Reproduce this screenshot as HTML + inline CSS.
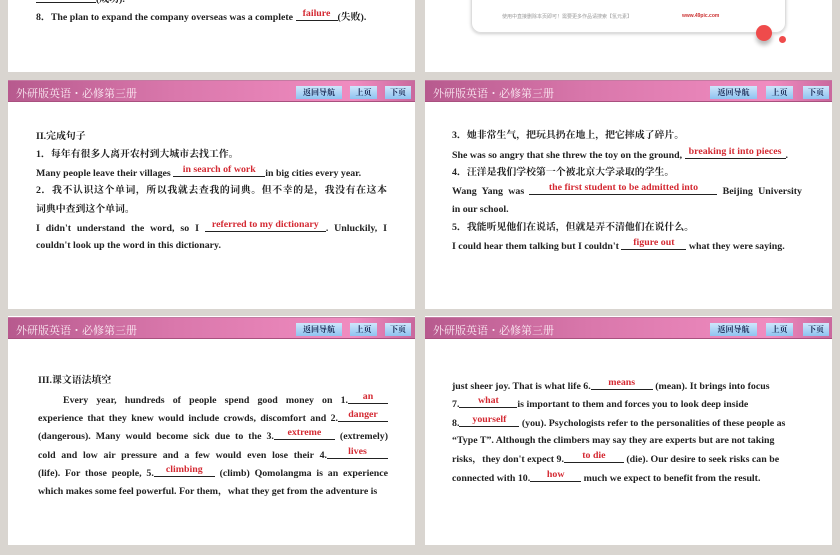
<!DOCTYPE html>
<html><head><meta charset="utf-8"><style>
*{margin:0;padding:0;box-sizing:border-box}
body{width:840px;height:555px;background:#d9d5d0;position:relative;overflow:hidden;font-family:"Liberation Serif","Noto Serif CJK SC",serif;font-weight:bold;font-size:9.9px;color:#222}
.p{position:absolute;background:#fff}
.h{position:absolute;height:22px;background:linear-gradient(90deg,#b75a8e 0%,#d977ab 40%,#f08cc0 85%,#c9689d 100%);border-top:1px solid #c47aa2;border-bottom:1px solid #a9507f}
.h .t{position:absolute;left:8px;top:4px;color:#fbe9f3;font-size:11px;font-weight:normal;font-family:"Noto Serif CJK SC",serif}
.btn{position:absolute;top:5px;height:13px;background:linear-gradient(#cfe6fb,#8fc3f0);color:#1a2a55;font-size:8px;text-align:center;line-height:13px;font-family:"Noto Serif CJK SC",serif}
.l{position:absolute;white-space:nowrap;line-height:12px}
.j{text-align:justify;text-align-last:justify;white-space:normal}
.b{display:inline-block;border-bottom:1px solid #222;position:relative;height:10px;vertical-align:-1px}
.b i{position:absolute;left:-10px;right:-10px;top:-3px;text-align:center;text-align-last:center;color:#d42a33;font-style:normal;white-space:nowrap}
</style></head><body>
<div class="p" style="left:8px;top:0;width:407px;height:72px"></div>
<div class="p" style="left:425px;top:0;width:407px;height:72px"></div>
<div style="position:absolute;left:471px;top:-10px;width:315px;height:43px;border:1px solid #ddd;border-radius:0 0 10px 10px;box-shadow:0 1px 3px #ccc"></div>
<div style="position:absolute;left:502px;top:13px;font-size:5px;color:#999;font-weight:normal;font-family:'Noto Sans CJK SC',sans-serif">使用中直接删除本页即可！需要更多作品请搜索【氢元素】</div>
<div style="position:absolute;left:682px;top:13px;font-size:5px;color:#c33;font-family:'Liberation Sans',sans-serif">www.49pic.com</div>
<div style="position:absolute;left:756px;top:25px;width:16px;height:16px;border-radius:50%;background:#ef4b4b;box-shadow:0 4px 4px #bbb"></div>
<div style="position:absolute;left:779px;top:36px;width:7px;height:7px;border-radius:50%;background:#ef4b4b"></div>
<div class="l" style="left:36px;top:-7px"><span class="b" style="width:60px"></span>(成功).</div>
<div class="l" style="left:36px;top:11px">8．The plan to expand the company overseas was a complete <span class="b" style="width:42px"><i>failure</i></span>(失败).</div>

<div class="p" style="left:8px;top:80px;width:407px;height:229px"></div>
<div class="p" style="left:425px;top:80px;width:407px;height:229px"></div>
<div class="p" style="left:8px;top:316px;width:407px;height:229px"></div>
<div class="p" style="left:425px;top:316px;width:407px;height:229px"></div>

<div class="h" style="left:8px;top:80px;width:407px"><span class="t">外研版英语・必修第三册</span><span class="btn" style="left:288px;width:46px">返回导航</span><span class="btn" style="left:342px;width:27px">上页</span><span class="btn" style="left:377px;width:26px">下页</span></div>
<div class="h" style="left:425px;top:80px;width:407px"><span class="t">外研版英语・必修第三册</span><span class="btn" style="left:285px;width:47px">返回导航</span><span class="btn" style="left:341px;width:27px">上页</span><span class="btn" style="left:378px;width:26px">下页</span></div>
<div class="h" style="left:8px;top:317px;width:407px"><span class="t">外研版英语・必修第三册</span><span class="btn" style="left:288px;width:46px">返回导航</span><span class="btn" style="left:342px;width:27px">上页</span><span class="btn" style="left:377px;width:26px">下页</span></div>
<div class="h" style="left:425px;top:317px;width:407px"><span class="t">外研版英语・必修第三册</span><span class="btn" style="left:285px;width:47px">返回导航</span><span class="btn" style="left:341px;width:27px">上页</span><span class="btn" style="left:378px;width:26px">下页</span></div>

<div class="l" style="left:36px;top:131px">II.完成句子</div>
<div class="l" style="left:36px;top:149px">1．每年有很多人离开农村到大城市去找工作。</div>
<div class="l" style="left:36px;top:167px">Many people leave their villages <span class="b" style="width:92px"><i>in search of work</i></span>in big cities every year.</div>
<div class="l j" style="left:36px;top:185px;width:351px">2．我不认识这个单词，所以我就去查我的词典。但不幸的是，我没有在这本</div>
<div class="l" style="left:36px;top:204px">词典中查到这个单词。</div>
<div class="l j" style="left:36px;top:222px;width:351px">I didn't understand the word, so I <span class="b" style="width:121px"><i>referred to my dictionary</i></span>. Unluckily, I</div>
<div class="l" style="left:36px;top:240px">couldn't look up the word in this dictionary.</div>

<div class="l" style="left:452px;top:130px">3．她非常生气，把玩具扔在地上，把它摔成了碎片。</div>
<div class="l" style="left:452px;top:149px">She was so angry that she threw the toy on the ground, <span class="b" style="width:101px"><i>breaking it into pieces</i></span>.</div>
<div class="l" style="left:452px;top:167px">4．汪洋是我们学校第一个被北京大学录取的学生。</div>
<div class="l j" style="left:452px;top:185px;width:350px">Wang Yang was <span class="b" style="width:188px"><i>the first student to be admitted into</i></span> Beijing University</div>
<div class="l" style="left:452px;top:204px">in our school.</div>
<div class="l" style="left:452px;top:222px">5．我能听见他们在说话，但就是弄不清他们在说什么。</div>
<div class="l" style="left:452px;top:240px">I could hear them talking but I couldn't <span class="b" style="width:65px"><i>figure out</i></span> what they were saying.</div>

<div class="l" style="left:38px;top:375px">III.课文语法填空</div>
<div class="l j" style="left:63px;top:394px;width:325px">Every year, hundreds of people spend good money on 1.<span class="b" style="width:40px"><i>an</i></span></div>
<div class="l j" style="left:38px;top:412px;width:350px">experience that they knew would include crowds, discomfort and 2.<span class="b" style="width:50px"><i>danger</i></span></div>
<div class="l j" style="left:38px;top:430px;width:350px">(dangerous). Many would become sick due to the 3.<span class="b" style="width:61px"><i>extreme</i></span> (extremely)</div>
<div class="l j" style="left:38px;top:449px;width:350px">cold and low air pressure and a few would even lose their 4.<span class="b" style="width:61px"><i>lives</i></span></div>
<div class="l j" style="left:38px;top:467px;width:350px">(life). For those people, 5.<span class="b" style="width:61px"><i>climbing</i></span> (climb) Qomolangma is an experience</div>
<div class="l" style="left:38px;top:486px">which makes some feel powerful. For them，what they get from the adventure is</div>

<div class="l" style="left:452px;top:380px">just sheer joy. That is what life 6.<span class="b" style="width:62px"><i>means</i></span> (mean). It brings into focus</div>
<div class="l" style="left:452px;top:398px">7.<span class="b" style="width:58px"><i>what</i></span>is important to them and forces you to look deep inside</div>
<div class="l" style="left:452px;top:417px">8.<span class="b" style="width:60px"><i>yourself</i></span> (you). Psychologists refer to the personalities of these people as</div>
<div class="l" style="left:452px;top:435px">“Type T”.  Although the climbers may say they are experts but are not taking</div>
<div class="l" style="left:452px;top:453px">risks，they don't expect 9.<span class="b" style="width:60px"><i>to die</i></span> (die). Our desire to seek risks can be</div>
<div class="l" style="left:452px;top:472px">connected with 10.<span class="b" style="width:51px"><i>how</i></span> much we expect to benefit from the result.</div>
</body></html>
